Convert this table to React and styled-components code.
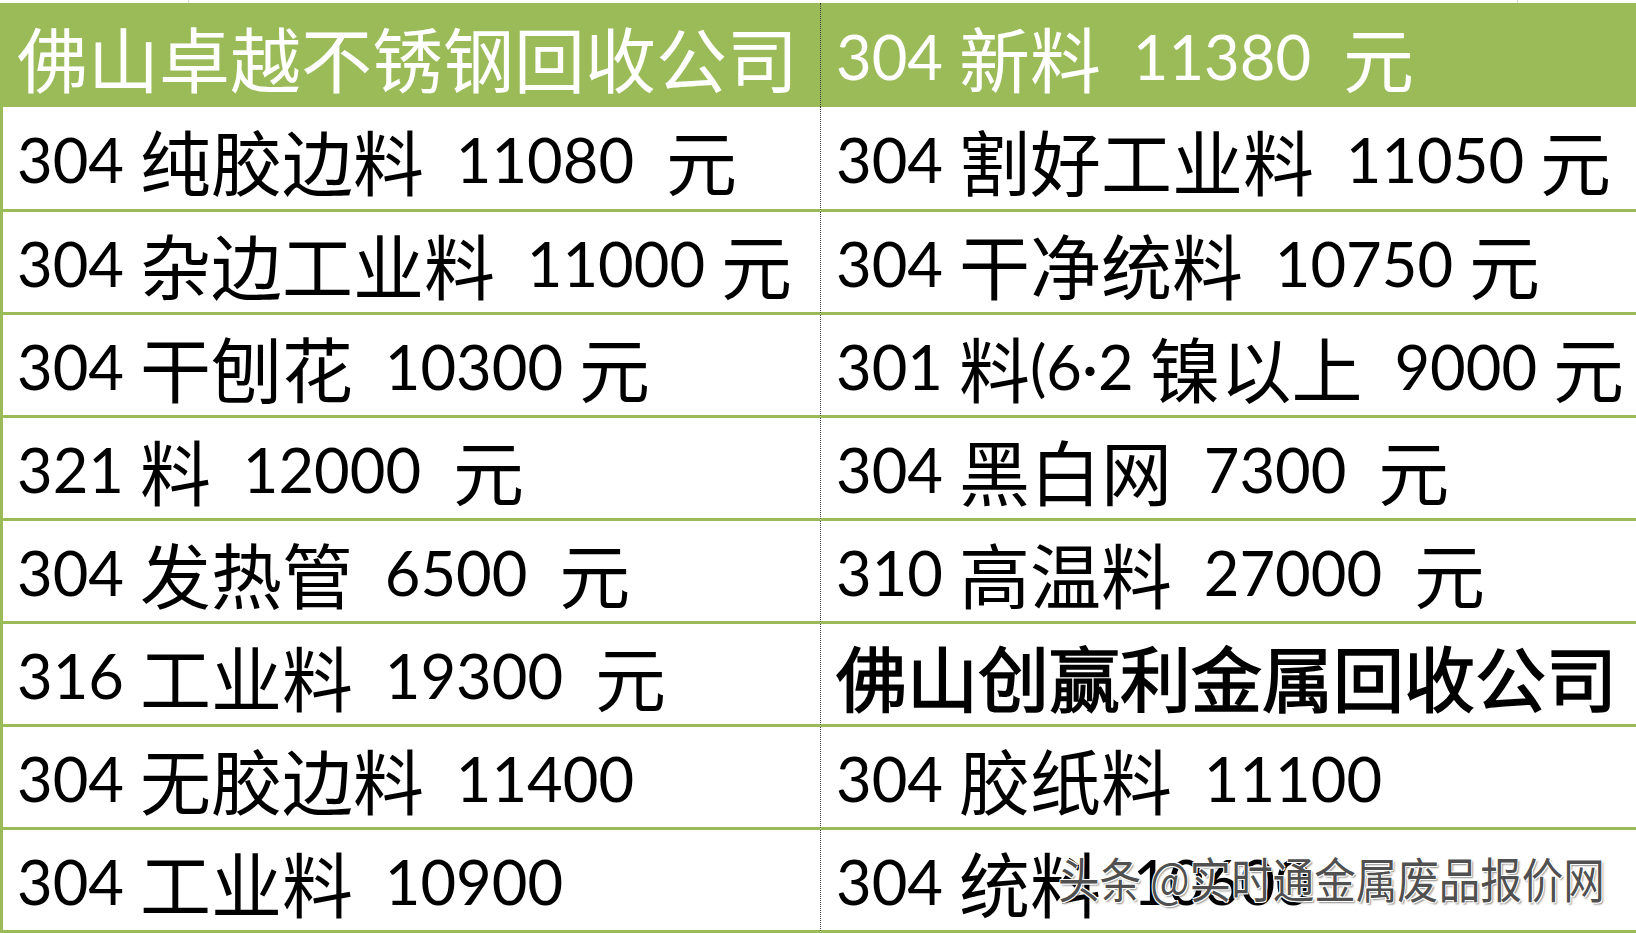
import React from "react";
import styled, { createGlobalStyle } from "styled-components";

const GREEN = "#9bbb59";

const GlobalStyle = createGlobalStyle`
  html, body {
    margin: 0;
    padding: 0;
    background: #ffffff;
  }
  body {
    width: 1636px;
    height: 933px;
    overflow: hidden;
  }
`;

const Sheet = styled.div`
  position: relative;
  display: grid;
  grid-template-columns: 820px 816px;
  grid-template-rows: 3px 104px 105px repeat(7, 103px);
  width: 1636px;
  height: 933px;
  font-family: "Noto Sans CJK SC", "Noto Sans CJK JP", sans-serif;
  font-size: 71px;
  line-height: 1;
  color: #000;
`;

const TopStrip = styled.div`
  grid-column: 1 / span 2;
  display: grid;
  grid-template-columns: 189px 1329px 1fr;
`;

const TopMark = styled.div`
  border-right: ${(p) => (p.$mark ? "1px solid #d4d4d4" : "none")};
`;

const Cell = styled.div`
  display: flex;
  align-items: center;
  box-sizing: border-box;
  white-space: pre;
  overflow: hidden;
  padding-left: ${(p) => (p.$side === "right" ? "15px" : "14px")};
  padding-top: 3px;
  border-left: ${(p) =>
    p.$side === "right" ? "1px dotted #3c3c3c" : `3px solid ${GREEN}`};
  border-bottom: ${(p) => (p.$head ? "none" : `3px solid ${GREEN}`)};
  background: ${(p) => (p.$head ? GREEN : "#ffffff")};
  color: ${(p) => (p.$head ? "#ffffff" : "#000000")};
  font-weight: 400;
  -webkit-text-stroke: ${(p) => (p.$bold ? "1.6px #000" : "0")};
`;

const Num = styled.span`
  font-family: Lato, "Liberation Sans", sans-serif;
  font-size: 61.5px;
  font-weight: 400;
`;

const Watermark = styled.div`
  position: absolute;
  left: 1058px;
  top: 853px;
  font-family: "Noto Sans CJK SC", sans-serif;
  font-size: 48px;
  line-height: 1;
  font-weight: 400;
  white-space: pre;
  color: rgba(55, 55, 55, 0.9);
  transform: scaleX(0.865);
  transform-origin: left top;
  text-shadow: 1px 1px 0 #fff, -1px -1px 0 #fff, 1px -1px 0 #fff,
    -1px 1px 0 #fff, 2px 2px 2px rgba(0, 0, 0, 0.45);
`;

const rows = [
  { head: true, left: "佛山卓越不锈钢回收公司", right: "304 新料  11380  元" },
  { left: "304 纯胶边料  11080  元", right: "304 割好工业料  11050 元" },
  { left: "304 杂边工业料  11000 元", right: "304 干净统料  10750 元" },
  { left: "304 干刨花  10300 元", right: "301 料(6·2 镍以上  9000 元" },
  { left: "321 料  12000  元", right: "304 黑白网  7300  元" },
  { left: "304 发热管  6500  元", right: "310 高温料  27000  元" },
  { left: "316 工业料  19300  元", right: "佛山创赢利金属回收公司", rightBold: true },
  { left: "304 无胶边料  11400", right: "304 胶纸料  11100" },
  { left: "304 工业料  10900", right: "304 统料  10600" },
];

function Text({ value }) {
  const parts = value.split(/([0-9()·]+)/);
  return parts.map((part, i) =>
    i % 2 === 1 ? <Num key={i}>{part}</Num> : <React.Fragment key={i}>{part}</React.Fragment>
  );
}

export default function App() {
  return (
    <>
      <GlobalStyle />
      <Sheet>
        <TopStrip>
          <TopMark $mark />
          <TopMark $mark />
          <TopMark />
        </TopStrip>
        {rows.map((row, i) => (
          <React.Fragment key={i}>
            <Cell $side="left" $head={row.head}>
              <Text value={row.left} />
            </Cell>
            <Cell $side="right" $head={row.head} $bold={row.rightBold}>
              <Text value={row.right} />
            </Cell>
          </React.Fragment>
        ))}
        <Watermark>头条 @实时通金属废品报价网</Watermark>
      </Sheet>
    </>
  );
}
